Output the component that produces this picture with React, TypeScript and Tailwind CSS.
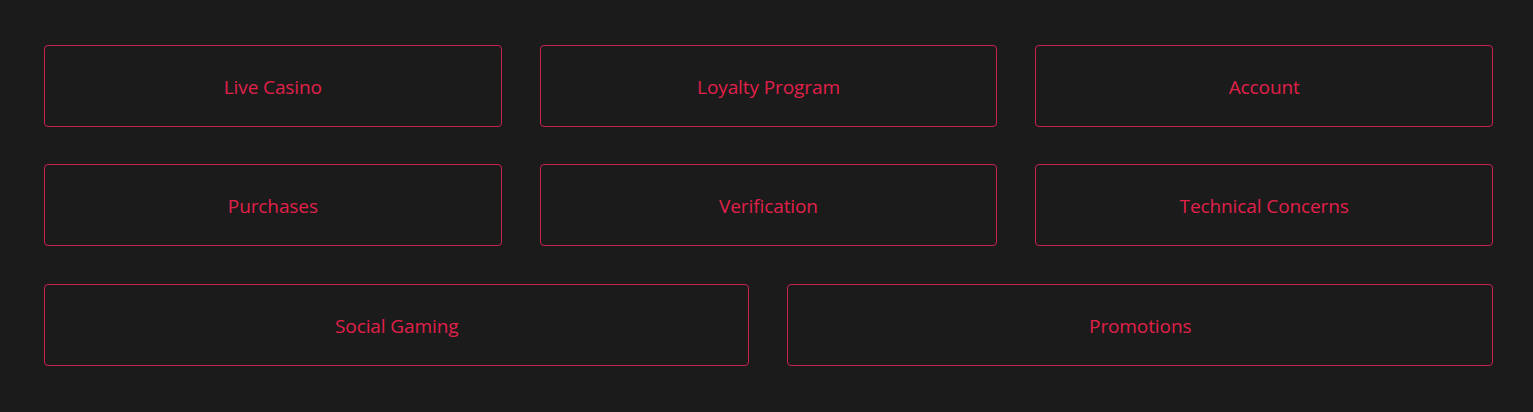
import React from "react";

const items = [
  { label: "Live Casino", cls: "col-span-2" },
  { label: "Loyalty Program", cls: "col-span-2" },
  { label: "Account", cls: "col-span-2" },
  { label: "Purchases", cls: "col-span-2" },
  { label: "Verification", cls: "col-span-2" },
  { label: "Technical Concerns", cls: "col-span-2" },
  { label: "Social Gaming", cls: "col-span-3 mt-[1px]" },
  { label: "Promotions", cls: "col-span-3 mt-[1px]" },
];

export default function App() {
  return (
    <div
      className="w-[1533px] h-[412px] bg-[#1b1b1b] pl-[44px] pr-[40px] pt-[45px]"
      style={{ fontFamily: '"Open Sans", "Noto Sans", sans-serif' }}
    >
      <div className="grid grid-cols-6 gap-x-[38px] gap-y-[37px]">
        {items.map((it) => (
          <div
            key={it.label}
            className={`${it.cls} h-[82px] flex items-center justify-center pt-[2px] rounded-[4px] border border-[#c8234f] text-[#e0204a] text-[19px] tracking-[-0.1px]`}
          >
            {it.label}
          </div>
        ))}
      </div>
    </div>
  );
}
